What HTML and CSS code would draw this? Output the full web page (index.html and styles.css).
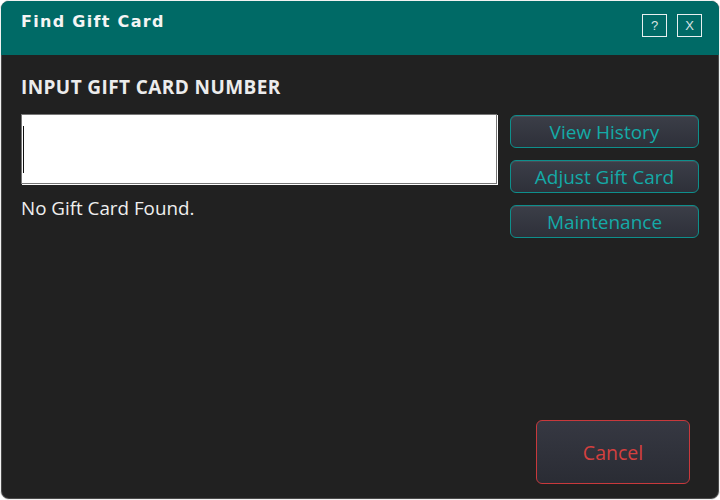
FILE: index.html
```html
<!DOCTYPE html>
<html>
<head>
<meta charset="utf-8">
<link rel="stylesheet" href="styles.css">
</head>
<body>
<div class="window">
  <div class="titlebar">
    <div class="title">Find Gift Card</div>
    <div class="title-buttons">
      <div class="tbtn">?</div>
      <div class="tbtn">X</div>
    </div>
  </div>
  <div class="content">
    <div class="label">INPUT GIFT CARD NUMBER</div>
    <div class="row">
      <div class="left">
        <div class="input"><span class="caret"></span></div>
        <div class="status">No Gift Card Found.</div>
      </div>
      <div class="actions">
        <div class="btn">View History</div>
        <div class="btn">Adjust Gift Card</div>
        <div class="btn">Maintenance</div>
      </div>
    </div>
    <div class="footer">
      <div class="cancel">Cancel</div>
    </div>
  </div>
</div>
</body>
</html>
```

FILE: styles.css
```css
html, body {
  margin: 0;
  padding: 0;
  background: #ffffff;
}
.window {
  width: 720px;
  height: 500px;
  box-sizing: border-box;
  border: 1px solid #f2f2f2;
  border-radius: 9px;
  box-shadow: inset 0 0 0 1px #4a4a4a;
  background: #212121;
  overflow: hidden;
  display: flex;
  flex-direction: column;
  font-family: "Open Sans", "Noto Sans", sans-serif;
}
.titlebar {
  height: 54px;
  background: #006a66;
  display: flex;
  justify-content: space-between;
  align-items: flex-start;
  flex-shrink: 0;
}
.title {
  font-family: "DejaVu Sans", sans-serif;
  font-weight: bold;
  font-size: 16px;
  color: #f4f4f4;
  padding: 11px 0 0 20px;
  letter-spacing: 1.3px;
}
.title-buttons {
  display: flex;
  gap: 10px;
  padding: 13px 17px 0 0;
}
.tbtn {
  width: 23px;
  height: 21px;
  border: 1px solid #e8f0f0;
  color: #d8e4e4;
  font-family: "Liberation Sans", sans-serif;
  font-size: 13px;
  display: flex;
  align-items: center;
  justify-content: center;
}
.content {
  flex: 1;
  display: flex;
  flex-direction: column;
  padding: 0 20px 15px 20px;
}
.label {
  font-weight: 700;
  font-size: 19px;
  color: #ececec;
  margin-top: 20px;
  line-height: 24px;
  letter-spacing: 0.4px;
}
.row {
  display: flex;
  gap: 13px;
  margin-top: 15px;
}
.left {
  width: 476px;
}
.input {
  height: 68px;
  border: 1px solid #777777;
  box-shadow: 1px 1px 0 #ffffff;
  background: #ffffff;
  display: flex;
  align-items: center;
  padding-left: 1px;
}
.caret {
  width: 1px;
  height: 47px;
  background: #111;
}
.status {
  margin-top: 12px;
  font-size: 18.8px;
  color: #efefef;
  line-height: 24px;
}
.actions {
  width: 189px;
  display: flex;
  flex-direction: column;
  gap: 12px;
  padding-top: 1px;
}
.btn {
  height: 31px;
  border: 1px solid #0e8f8c;
  border-radius: 6px;
  background: linear-gradient(#3b3e48, #2e3039);
  box-shadow: inset 0 1px 0 #4a4d57;
  color: #14aaa7;
  font-size: 19px;
  display: flex;
  align-items: center;
  justify-content: center;
}
.footer {
  margin-top: auto;
  display: flex;
  justify-content: flex-end;
  padding-right: 9px;
}
.cancel {
  width: 152px;
  height: 62px;
  border: 1px solid #c8393c;
  border-radius: 6px;
  background: linear-gradient(#363842, #2a2c34);
  color: #d4403f;
  font-size: 19.5px;
  display: flex;
  align-items: center;
  justify-content: center;
}
```
